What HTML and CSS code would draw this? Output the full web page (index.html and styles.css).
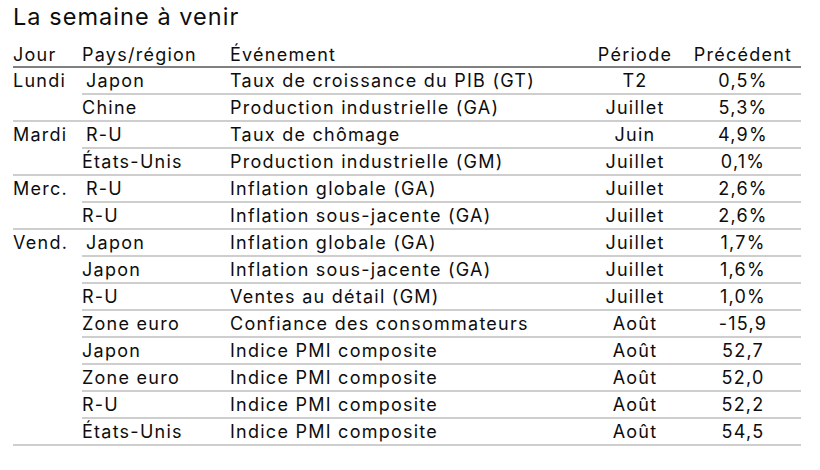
FILE: index.html
```html
<!DOCTYPE html>
<html lang="fr">
<head>
<meta charset="utf-8">
<title>La semaine à venir</title>
<link rel="stylesheet" href="styles.css">
</head>
<body>
<div class="page">
  <h1 class="title">La semaine à venir</h1>
  <table class="cal">
    <colgroup>
      <col class="c-day"><col class="c-country"><col class="c-event"><col class="c-period"><col class="c-prev">
    </colgroup>
    <thead>
      <tr><th class="l">Jour</th><th class="l">Pays/région</th><th class="l">Événement</th><th class="c">Période</th><th class="c">Précédent</th></tr>
    </thead>
    <tbody>
      <tr><td class="day" rowspan="2">Lundi</td><td class="first">Japon</td><td>Taux de croissance du PIB (GT)</td><td class="c">T2</td><td class="c">0,5%</td></tr>
      <tr><td>Chine</td><td>Production industrielle (GA)</td><td class="c">Juillet</td><td class="c">5,3%</td></tr>
      <tr><td class="day" rowspan="2">Mardi</td><td class="first">R-U</td><td>Taux de chômage</td><td class="c">Juin</td><td class="c">4,9%</td></tr>
      <tr><td>États-Unis</td><td>Production industrielle (GM)</td><td class="c">Juillet</td><td class="c">0,1%</td></tr>
      <tr><td class="day" rowspan="2">Merc.</td><td class="first">R-U</td><td>Inflation globale (GA)</td><td class="c">Juillet</td><td class="c">2,6%</td></tr>
      <tr><td>R-U</td><td>Inflation sous-jacente (GA)</td><td class="c">Juillet</td><td class="c">2,6%</td></tr>
      <tr><td class="day" rowspan="8">Vend.</td><td class="first">Japon</td><td>Inflation globale (GA)</td><td class="c">Juillet</td><td class="c">1,7%</td></tr>
      <tr><td>Japon</td><td>Inflation sous-jacente (GA)</td><td class="c">Juillet</td><td class="c">1,6%</td></tr>
      <tr><td>R-U</td><td>Ventes au détail (GM)</td><td class="c">Juillet</td><td class="c">1,0%</td></tr>
      <tr><td>Zone euro</td><td>Confiance des consommateurs</td><td class="c">Août</td><td class="c">-15,9</td></tr>
      <tr><td>Japon</td><td>Indice PMI composite</td><td class="c">Août</td><td class="c">52,7</td></tr>
      <tr><td>Zone euro</td><td>Indice PMI composite</td><td class="c">Août</td><td class="c">52,0</td></tr>
      <tr><td>R-U</td><td>Indice PMI composite</td><td class="c">Août</td><td class="c">52,2</td></tr>
      <tr><td>États-Unis</td><td>Indice PMI composite</td><td class="c">Août</td><td class="c">54,5</td></tr>
    </tbody>
  </table>
</div>
</body>
</html>
```

FILE: styles.css
```css
html, body {
  margin: 0;
  padding: 0;
  background: #ffffff;
}

.page {
  padding: 0 19px 0 13px;
  font-family: Inter, "Liberation Sans", sans-serif;
  color: #0d0d0d;
}

.title {
  margin: 0;
  padding-top: 1px;
  font-size: 23.5px;
  font-weight: 400;
  line-height: 32px;
  letter-spacing: 1.05px;
}

.cal {
  margin-top: 8px;
  width: 788px;
  border-collapse: collapse;
  table-layout: fixed;
  font-size: 18px;
  letter-spacing: 1.25px;
}

.c-day { width: 69px; }
.c-country { width: 148px; }
.c-event { width: 355px; }
.c-period { width: 100px; }
.c-prev { width: 116px; }

.cal th {
  font-weight: 400;
  height: 23px;
  padding: 2px 0 0;
  line-height: 23px;
  border-bottom: 2px solid #808080;
  white-space: nowrap;
}

.cal td {
  height: 24px;
  padding: 1px 0 0;
  line-height: 24px;
  border-bottom: 2px solid #cecece;
  white-space: nowrap;
  vertical-align: middle;
}

.cal td.day {
  vertical-align: top;
}

.cal td.first {
  padding-left: 4px;
}

.l { text-align: left; }
.c { text-align: center; }
```
